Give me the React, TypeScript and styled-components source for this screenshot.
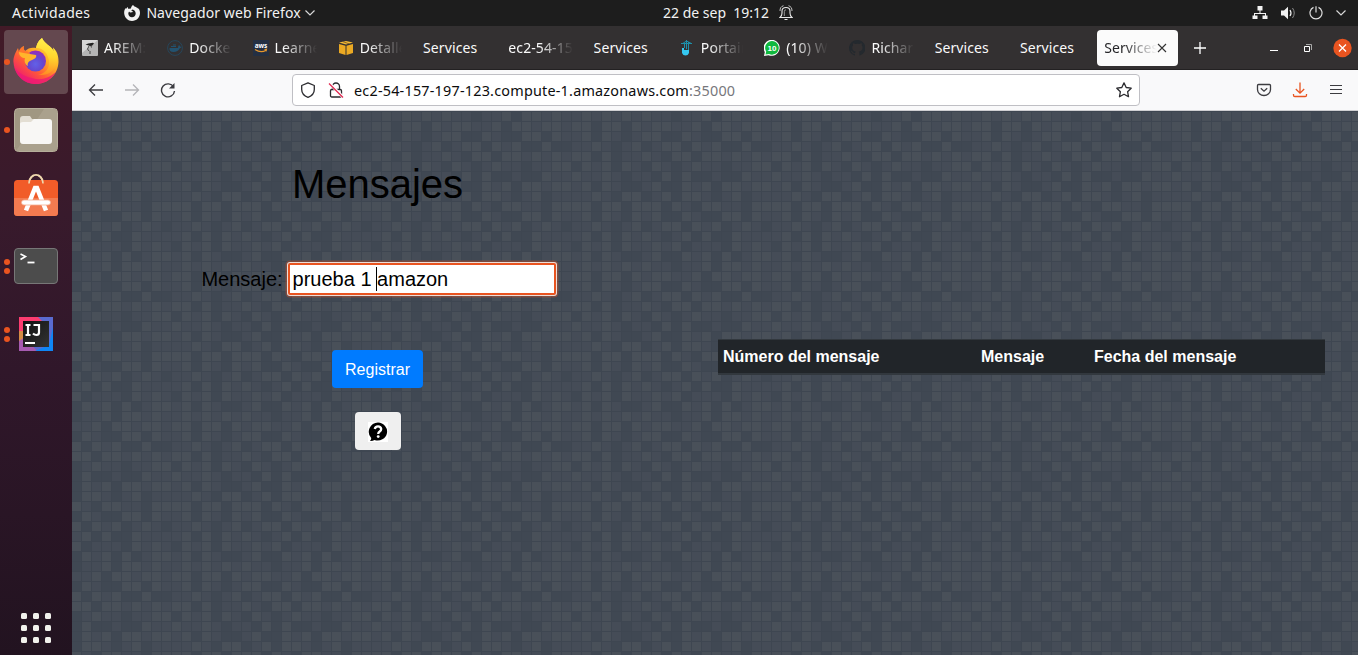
import React from "react";
import styled, { createGlobalStyle, css } from "styled-components";

const ui = `"Noto Sans", "Open Sans", sans-serif`;
const arial = `"Liberation Sans", Arial, sans-serif`;

const GlobalStyle = createGlobalStyle`
  * { box-sizing: border-box; }
  body { margin: 0; background: #414955; overflow: hidden; }
  svg { display: block; flex: none; }
`;

const Desktop = styled.div`
  display: grid;
  grid-template: 26px 629px / 72px 1fr;
  width: 1358px;
  height: 655px;
  font-family: ${ui};
`;

const TopBar = styled.header`
  grid-column: 1 / -1;
  display: grid;
  grid-template-columns: 651px 1fr auto;
  align-items: center;
  background: #1d1d1d;
  color: #f2f2f2;
  padding: 0 12px 1px 12px;
`;

const BarGroup = styled.div<{ $gap?: number; $indent?: number }>`
  display: flex;
  align-items: center;
  gap: ${(p) => p.$gap ?? 8}px;
  margin-left: ${(p) => p.$indent ?? 0}px;
`;

const Label = styled.span<{ $track?: number; $width?: number }>`
  font-size: 14px;
  line-height: 20px;
  white-space: pre;
  letter-spacing: ${(p) => p.$track ?? 0}px;
  ${(p) => p.$width && css`width: ${p.$width}px;`}
`;

const Dock = styled.nav`
  display: flex;
  flex-direction: column;
  background: linear-gradient(#421a27 0, #381a2c 30%, #30172a 55%, #221320 100%);
  padding-top: 4px;
`;

const DockSlot = styled.div<{ $active?: boolean; $height: number }>`
  display: grid;
  grid-template-columns: 7px 1fr;
  align-items: center;
  justify-items: center;
  width: 64px;
  height: ${(p) => p.$height}px;
  margin: 0 4px;
  border-radius: 4px;
  background: ${(p) => (p.$active ? "#64484f" : "transparent")};
`;

const Dots = styled.div`
  display: flex;
  flex-direction: column;
  gap: 3px;
  margin-left: -2px;
`;

const Dot = styled.i`
  width: 6px;
  height: 6px;
  border-radius: 50%;
  background: #ea5420;
`;

const DockIcon = styled.div`
  padding-right: 7px;
`;

const AppsGrid = styled.div`
  display: grid;
  grid-template-columns: repeat(3, 6px);
  gap: 6px;
  margin: auto auto 12px 21px;
`;

const AppsCell = styled.i`
  width: 6px;
  height: 6px;
  border-radius: 1.5px;
  background: #f1f1ec;
`;

const Browser = styled.main`
  display: grid;
  grid-template-rows: 44px 41px 1fr;
  min-width: 0;
`;

const TabStrip = styled.div`
  display: flex;
  align-items: center;
  background: #333031;
  border-bottom: 1px solid #232122;
  color: #fafafa;
`;

const Tab = styled.div`
  display: flex;
  align-items: center;
  gap: 6px;
  width: 85.27px;
  flex: none;
  padding: 0 11px 0 10px;
`;

const TabTitle = styled.div<{ $fade?: boolean }>`
  flex: 1;
  min-width: 0;
  overflow: hidden;
  font-size: 14px;
  line-height: 22px;
  padding-top: 1px;
  letter-spacing: 0.1px;
  white-space: nowrap;
  ${(p) => p.$fade && css`mask-image: linear-gradient(to left, transparent 0, #000 34px);`}
`;

const ActiveTab = styled.div`
  display: flex;
  align-items: center;
  width: 81px;
  height: 36px;
  margin-left: 2px;
  border-radius: 4px;
  background: #fbfbfb;
  color: #252528;
  padding: 0 11px 0 7px;
`;

const NavBar = styled.div`
  display: flex;
  align-items: center;
  background: #f9f9fa;
  border-bottom: 1px solid #cfcfd2;
  padding: 0 14px 0 16px;
`;

const NavButtons = styled.div`
  display: flex;
  gap: 20px;
  width: 204px;
`;

const UrlBox = styled.div`
  display: flex;
  align-items: center;
  width: 848px;
  height: 32px;
  border: 1px solid #bfbfc4;
  border-radius: 4px;
  background: #fff;
  padding: 0 7px;
  gap: 12px;
`;

const Url = styled.div`
  flex: 1;
  font-size: 14.4px;
  line-height: 20px;
  color: #0c0c0d;
  margin-left: -2px;
  padding-top: 1px;
  letter-spacing: 0.21px;
  span { color: #77777c; }
`;

const NavActions = styled.div`
  display: flex;
  gap: 20px;
  margin-left: auto;
`;

const Page = styled.section`
  position: relative;
  overflow: hidden;
  display: grid;
  grid-template-columns: 646px 607px;
  color: #000;
  font-family: ${arial};
`;

const Backdrop = styled.svg`
  position: absolute;
  inset: 0;
`;

const FormColumn = styled.div`
  position: relative;
  display: flex;
  flex-direction: column;
  align-items: center;
  width: 611px;
`;

const Heading = styled.h1`
  margin: 49px 0 0;
  font-size: 40px;
  line-height: 48px;
  font-weight: 500;
`;

const Field = styled.label`
  display: flex;
  align-items: center;
  gap: 5px;
  margin-top: 55px;
  margin-left: 2px;
  font-size: 20px;
  line-height: 30px;
`;

const TextBox = styled.div`
  width: 268px;
  height: 32px;
  background: #fff;
  border: 2px solid #e95420;
  border-radius: 2px;
  box-shadow: 0 0 0 1px #eadfdb, 0 0 0 2.5px rgba(233, 84, 32, 0.35);
  padding-left: 3px;
  line-height: 28px;
  display: flex;
  align-items: center;
  white-space: pre;
`;

const Caret = styled.i`
  width: 1px;
  height: 24px;
  background: #000;
  margin: 0 0 0 -1px;
`;

const Register = styled.button`
  width: 91px;
  height: 38px;
  margin-top: 55px;
  border: 0;
  border-radius: 4px;
  background: #007bff;
  color: #fff;
  font: 16px/24px ${arial};
  padding: 2px 0 0;
`;

const Help = styled.button`
  display: grid;
  place-items: center;
  width: 46px;
  height: 38px;
  margin-top: 24px;
  border: 0;
  border-radius: 4px;
  background: #efefef;
  padding: 2px 0 0;
`;

const TableHead = styled.div`
  position: relative;
  display: grid;
  grid-template-columns: 258px 113px 1fr;
  align-self: start;
  height: 36px;
  margin-top: 228px;
  padding-left: 5px;
  background: #212529;
  border: solid #32383e;
  border-width: 1px 0 2px;
  color: #fff;
  font-size: 16px;
  font-weight: 700;
  line-height: 33px;
`;

const CELLS = [
  "11212121211011202212",
  "12202202122112022122",
  "11202101220021002202",
  "01121012012202120020",
  "12202011210220221212",
  "20212021021012110112",
  "12112101102020010021",
  "21202100120021202212",
  "11121022012022101201",
  "22202202220210221102",
  "11202102120021002202",
  "01121012012202120121",
  "11202021210120200211",
  "10212021121201110212",
  "21202100120021202012",
];
const SHADES = ["#404853", "#454c57", "#495059"];

const Mosaic = () => (
  <Backdrop width="1286" height="544">
    <defs>
      <pattern id="mosaic" x="90" width="200" height="150" patternUnits="userSpaceOnUse">
        <rect width="200" height="150" fill="#3e4651" />
        {CELLS.flatMap((row, y) =>
          row.split("").map((c, x) => (
            <rect key={`${x}-${y}`} x={x * 10} y={y * 10 + 1} width="9" height="9" fill={SHADES[+c]} />
          ))
        )}
      </pattern>
    </defs>
    <rect width="1286" height="544" fill="url(#mosaic)" />
  </Backdrop>
);

const Firefox = () => (
  <svg width="46" height="48" viewBox="0 1 46 48">
    <defs>
      <linearGradient id="ffBody" x1=".85" y1=".1" x2=".2" y2=".95">
        <stop offset="0" stopColor="#ffe83e" />
        <stop offset=".35" stopColor="#ffae25" />
        <stop offset=".65" stopColor="#ff5a37" />
        <stop offset="1" stopColor="#ee1575" />
      </linearGradient>
      <linearGradient id="ffFlame" x1=".6" y1="0" x2=".5" y2="1">
        <stop offset="0" stopColor="#fff44f" />
        <stop offset=".5" stopColor="#ffd52d" />
        <stop offset="1" stopColor="#ff8c24" />
      </linearGradient>
      <radialGradient id="ffGlobe" cx=".5" cy=".65" r=".6">
        <stop offset="0" stopColor="#6161e8" />
        <stop offset=".6" stopColor="#6547cf" />
        <stop offset="1" stopColor="#922fba" />
      </radialGradient>
    </defs>
    <path fill="url(#ffBody)" d="M29 1c-4 3-5 6-6 10-4-1-8 0-11 3-1-1-2-3-1-5-3 1-4 4-5 6L5 11C1 18 0 22 .6 26 1.500 38 11 47 23 47s22-9.500 22.500-22c.2-6-1.500-11-5.500-14.500l1 4c-3-6-9-7-12-13.500Z" />
    <path fill="url(#ffFlame)" d="M29 1c-4 3-5 6-6 10 8 0 12 6 13 13 1 8-5 13-11 14 12 1 19-6 19-16 0-4-1-8-4-11.500l1 4c-3-6-9-7-12-13.500Z" />
    <circle cx="22.500" cy="24" r="10.500" fill="url(#ffGlobe)" />
    <path fill="#ffb52b" d="M6 15c4-2 8-1 11 2l6 1c1 2-1 4-4 5-3 1-5 3-4 6-3-1-4-5-3-8-3 0-6-2-6-6Z" />
    <path fill="#ff762d" d="M12 14c-1-1-2-3-1-5-4 2-5 4-5 6 3 1 6 1 11 2-1-2-3-3-5-3Z" />
    <path fill="#eb1878" opacity=".75" d="M1 29c3 11 10 18 22 18 9 0 16-5 20-12-7 6-15 9-24 6C10 39 4 35 1 29Z" />
  </svg>
);

const FilesIcon = () => (
  <svg width="44" height="44" viewBox="0 0 44 44">
    <rect x=".5" y=".5" width="43" height="43" rx="4" fill="#a09782" stroke="#b6ae9b" />
    <path d="M30 1h13v42H2Z" fill="#aaa18d" />
    <path d="M6 11q0-3 3-3h7l2 3h4v5H6Z" fill="#e3ded3" />
    <path d="M6 16q0-2 3-2h8l3-3h15q3 0 3 3v19q0 3-3 3H9q-3 0-3-3Z" fill="#f8f7f5" />
  </svg>
);

const SoftwareIcon = () => (
  <svg width="44" height="44" viewBox="0 0 44 44" overflow="visible">
    <path d="M15 8.500C15-3 29-3 29 8.500" fill="none" stroke="#eed7ad" strokeWidth="1.800" />
    <rect y="5" width="44" height="36" rx="3.500" fill="#f15c29" />
    <path d="M0 23h44v14.500q0 3.500-3.500 3.500h-37Q0 41 0 37.500Z" fill="#f37b50" />
    <path d="M15 8.500C15.200 5 17 2 19.500.800M29 8.500C28.800 5 27 2 24.500.800" fill="none" stroke="#eed7ad" strokeWidth="1.600" />
    <path d="m12 35.500 9-22.500h2l9 22.500" fill="none" stroke="#fff" strokeWidth="4.500" />
    <rect x="7.500" y="25" width="29" height="5" rx="2.500" fill="#fff" stroke="#f4ad91" strokeWidth=".8" />
  </svg>
);

const TerminalIcon = () => (
  <svg width="44" height="36" viewBox="0 0 44 36">
    <rect x=".5" y=".5" width="43" height="35" rx="3.500" fill="#4c4c4c" stroke="#777" />
    <path d="m6.500 6 5 2.500-5 3" fill="none" stroke="#fff" strokeWidth="1.600" />
    <path d="M13.500 14.500h7" stroke="#fff" strokeWidth="1.800" />
  </svg>
);

const IntellijIcon = () => (
  <svg width="34" height="34" viewBox="0 0 34 34">
    <defs>
      <linearGradient id="ijInk" x1="0" y1="0" x2="1" y2="1">
        <stop offset="0" stopColor="#111" />
        <stop offset="1" stopColor="#333" />
      </linearGradient>
    </defs>
    <path fill="#5a6bd0" d="M0 0h34v34H0Z" />
    <path fill="#fc3c70" d="M0 0h19l6 6L4 18 0 14Z" />
    <path fill="#d58c45" d="M0 14h6v10l-4 5-2-5Z" />
    <path fill="#a65bb0" d="M0 24l6-4 12 14H0Z" />
    <path fill="#0f86f5" d="M34 10v24H16l14-6Z" />
    <rect x="4" y="4" width="26" height="26" fill="url(#ijInk)" />
    <path d="M6.500 8h5M9 8v10M6.500 18h5M14.500 8H20v7.500q0 2.500-2.500 2.500-2 0-3.500-1.500" fill="none" stroke="#fff" strokeWidth="2.200" />
    <path d="M6 26h10" stroke="#fff" strokeWidth="2" />
  </svg>
);

const FirefoxMono = () => (
  <svg width="16" height="16" viewBox="0 0 16 16">
    <path fill="#f2f2f2" d="M9 0C7.600 1 7 2.200 7 3.500 5.800 3.300 5 3.700 4.500 4.100 4 3.600 3.900 2.700 4 2 3 2.500 2.400 3.500 2 4l-.4-1C.5 4.500 0 6.500.2 8.500.6 12.800 4 16 8 16c4.400 0 8-3.600 8-8 0-2-.7-4-1.700-5l.2 1.200C12.900 1.500 11 2.700 9 0Z" />
    <path fill="#1d1d1d" d="M8.500 4.500c1.700.4 3.200 1.900 3.200 4 0 2.200-1.700 3.700-3.700 3.700S4.300 10.700 4.300 8.500c0-.8.300-1.500.8-2 .3.600.8 1 1.500 1L9 6.900c0-.7-.9-.8-1.700-.8.100-.7.500-1.300 1.200-1.600Z" />
  </svg>
);

const Chevron = () => (
  <svg width="10" height="6" viewBox="0 0 10 6" fill="none" stroke="#d8d8d8" strokeWidth="1.200"><path d="m.5.500 4.500 4.500L9.500.500" /></svg>
);

const Bell = () => (
  <svg width="14" height="16" viewBox="0 0 14 16" fill="none" stroke="#e6e6e6" strokeWidth="1.100">
    <path d="M1 12.500Q3 11 3 8V6Q3 2.500 7 2.500T11 6v2q0 3 2 4.500ZM5.500 14.500h3" />
    <path d="M1 6C1 3 2 1.500 4.500.700M13 6c0-3-1-4.500-3.500-5.300" strokeWidth=".8" />
    <path d="M5.300 11V6.500q0-1.700 1.700-1.700" strokeWidth=".6" />
  </svg>
);

const NetworkIcon = () => (
  <svg width="16" height="14" viewBox="0 0 16 14" fill="#f2f2f2"><path d="M5.500 0h5v4.500h-2V7H14v2.500h1.500V13h-5V9.500H13V8H3v1.500h2.500V13h-5V9.500H2V7h5.500V4.500h-2Z" /></svg>
);

const VolumeIcon = () => (
  <svg width="15" height="14" viewBox="0 0 15 14" fill="none" stroke="#f2f2f2">
    <path d="M0 4.500h3L7 .800v12.400L3 9.500H0Z" fill="#f2f2f2" stroke="none" />
    <path d="M9 4q2 3 0 6" strokeWidth="1.200" /><path d="M11.500 2q3.500 5 0 10" stroke="#8b8b8b" />
  </svg>
);

const PowerIcon = () => (
  <svg width="14" height="14" viewBox="0 0 14 14" fill="none" stroke="#dedede" strokeWidth="1.200"><path d="M4.500 1.400a6 6 0 1 0 5 0M7 .200V6.500" /></svg>
);

const Favicon = ({ kind }: { kind: string }) => {
  switch (kind) {
    case "arem":
      return (
        <svg width="16" height="16" viewBox="0 0 16 16"><rect width="16" height="16" rx="1" fill="#b5b5b5" /><path d="M0 0h16L0 13Z" fill="#d6d6d6" /><path d="M3.500 4.800 6 3.500l5-.8 1 .8-2 2.300-2 .2-2-.8Z" fill="#222" /><path d="m7 6-1.500 3 1.500 2M9 6l.5 1.500M8 11v3" stroke="#444" fill="none" /></svg>
      );
    case "docker":
      return (
        <svg width="16" height="16" viewBox="0 0 16 16"><circle cx="8" cy="8" r="7.400" fill="none" stroke="#27465a" /><path d="M2.500 8h8.500q0-2 1-3 1 .500 1 1.500 1 0 1.500.500-.500 1-1.700 1.200Q11 12 6.500 12T2.500 8Z" fill="#23526f" /><path d="M4 6.500h5M6 5h3" stroke="#23526f" /></svg>
      );
    case "aws":
      return (
        <svg width="16" height="16" viewBox="0 0 16 16"><rect width="16" height="16" fill="#232f43" /><text x="8" y="7.800" textAnchor="middle" fontFamily="Noto Sans" fontWeight="700" fontSize="6.500" fill="#fff">aws</text><path d="M2 9.500q6 4 11 .700M11.500 9.500l2-.200-.500 2" fill="none" stroke="#e6962b" strokeWidth="1.200" /></svg>
      );
    case "box":
      return (
        <svg width="16" height="16" viewBox="0 0 16 16"><path d="m1 2.500 7-1.500 7 1.500-7 2Z" fill="#f6ba35" /><path d="m1 4 6.500 1.700V15L1 13ZM15 4 8.500 5.700V15L15 13Z" fill="#eba923" /><path d="m4.500 1.500 7 2.500" stroke="#6b5122" strokeWidth=".8" /></svg>
      );
    case "portainer":
      return (
        <svg width="16" height="16" viewBox="0 0 16 16"><path d="M2 3.500h11M7.500 0v9M9.500 2v9M4 3.300 7.500 1 12 3.300M5.500 4v4" stroke="#1d8fa9" fill="none" /><path d="M3 8h2v2h5v3q-1 2.500-3.500 2.500T3 13Z" fill="#35c8f0" /></svg>
      );
    case "whatsapp":
      return (
        <svg width="16" height="16" viewBox="0 0 16 16"><path d="M0 16 .8 12A8 8 0 1 1 4.500 15.200Z" fill="#fff" /><path d="m1.500 14.500.7-3A6.800 6.800 0 1 1 5 14Z" fill="#10b93e" /><text x="8" y="10.700" textAnchor="middle" fontFamily="Liberation Sans" fontWeight="700" fontSize="8" fill="#fff">10</text></svg>
      );
    default:
      return (
        <svg width="16" height="16" viewBox="0 0 16 16"><path fill="#24292e" d="M8 0a8 8 0 0 0-2.500 15.600c.4.100.500-.200.500-.400v-1.500c-2 .500-2.700-.500-2.900-1-.1-.3-.6-1-1-1.200-.4-.2-.9-.7 0-.7.800 0 1.300.7 1.500 1 .9 1.500 2.200 1.100 2.700.9.100-.6.300-1 .6-1.300-1.800-.2-3.600-.9-3.600-4 0-.9.300-1.600.8-2.100-.1-.2-.4-1 .1-2.100 0 0 .7-.2 2.200.8a7.500 7.500 0 0 1 4 0c1.500-1 2.200-.8 2.200-.8.400 1.100.2 1.900.1 2.100.5.500.8 1.200.8 2.100 0 3.100-1.900 3.800-3.700 4 .3.200.6.700.6 1.500v2.300c0 .2.100.5.500.4A8 8 0 0 0 8 0Z" /></svg>
      );
  }
};

const TABS: { icon?: string; title: string }[] = [
  { icon: "arem", title: "AREM:" },
  { icon: "docker", title: "Docke" },
  { icon: "aws", title: "Learne" },
  { icon: "box", title: "Detalle" },
  { title: "Services" },
  { title: "ec2-54-15" },
  { title: "Services" },
  { icon: "portainer", title: "Portain" },
  { icon: "whatsapp", title: "(10) W" },
  { icon: "github", title: "Richar" },
  { title: "Services" },
  { title: "Services" },
];

const WindowControls = styled.div`
  display: flex;
  align-items: center;
  margin-left: auto;
  padding-right: 6px;
`;

const NewTab = styled.div`
  margin-left: 16px;
`;

const Running = ({ count }: { count: number }) => (
  <Dots>{Array.from({ length: count }, (_, i) => <Dot key={i} />)}</Dots>
);

export default function App() {
  return (
    <Desktop>
      <GlobalStyle />
      <TopBar>
        <BarGroup $gap={0}>
          <Label $track={0.33}>Actividades</Label>
          <BarGroup $gap={6} $indent={34}>
            <FirefoxMono />
            <Label $track={0.1}>Navegador web Firefox</Label>
          </BarGroup>
          <BarGroup $indent={4}>
            <Chevron />
          </BarGroup>
        </BarGroup>
        <BarGroup $gap={9}>
          <Label $width={107}>22 de sep  19:12</Label>
          <Bell />
        </BarGroup>
        <BarGroup $gap={13}>
          <NetworkIcon />
          <VolumeIcon />
          <PowerIcon />
          <Chevron />
        </BarGroup>
      </TopBar>
      <Dock>
        <DockSlot $active $height={64}><Running count={1} /><DockIcon><Firefox /></DockIcon></DockSlot>
        <DockSlot $height={72}><Running count={1} /><DockIcon><FilesIcon /></DockIcon></DockSlot>
        <DockSlot $height={62}><span /><DockIcon><SoftwareIcon /></DockIcon></DockSlot>
        <DockSlot $height={76}><Running count={2} /><DockIcon><TerminalIcon /></DockIcon></DockSlot>
        <DockSlot $height={60}><Running count={2} /><DockIcon><IntellijIcon /></DockIcon></DockSlot>
        <AppsGrid>{Array.from({ length: 9 }, (_, i) => <AppsCell key={i} />)}</AppsGrid>
      </Dock>
      <Browser>
        <TabStrip>
          {TABS.map((t, i) => (
            <Tab key={i}>
              {t.icon && <Favicon kind={t.icon} />}
              <TabTitle $fade={t.title !== "Services"}>{t.title}</TabTitle>
            </Tab>
          ))}
          <ActiveTab>
            <TabTitle $fade>Services</TabTitle>
            <svg width="10" height="10" viewBox="0 0 10 10" stroke="#333" strokeWidth="1.100"><path d="m1 1 8 8M9 1 1 9" /></svg>
          </ActiveTab>
          <NewTab>
            <svg width="12" height="12" viewBox="0 0 12 12" stroke="#fff" strokeWidth="1.300"><path d="M6 0v12M0 6h12" /></svg>
          </NewTab>
          <WindowControls>
            <svg width="88" height="20" viewBox="0 0 88 20" fill="none" stroke="#fff">
              <path d="M6 12.500h8" />
              <path d="M40.500 8.500h5v5h-5Z" />
              <path d="M42 6.500h5.500V12" stroke="#aaa" />
              <circle cx="78.500" cy="10" r="9.200" fill="#e95420" stroke="none" />
              <path d="m75 6.500 7 7M82 6.500l-7 7" strokeWidth="1.300" />
            </svg>
          </WindowControls>
        </TabStrip>
        <NavBar>
          <NavButtons>
            <svg width="16" height="16" viewBox="0 0 16 16" fill="none" stroke="#3c3c40" strokeWidth="1.300"><path d="M15 8H1.500M7 2.500 1.500 8 7 13.500" /></svg>
            <svg width="16" height="16" viewBox="0 0 16 16" fill="none" stroke="#b5b5b8" strokeWidth="1.300"><path d="M1 8h13.500M9 2.500 14.500 8 9 13.500" /></svg>
            <svg width="16" height="16" viewBox="0 0 16 16" fill="none" stroke="#3c3c40" strokeWidth="1.400"><path d="M13.600 5A6.500 6.500 0 1 0 14.500 9" /><path d="M14.500 1v5.500H9Z" fill="#3c3c40" stroke="none" /></svg>
          </NavButtons>
          <UrlBox>
            <svg width="16" height="16" viewBox="0 0 16 16" fill="none" stroke="#2b2b2f" strokeWidth="1.300"><path d="M8 .800 14.300 3.500v4C14.300 11 11.500 14 8 15.300 4.500 14 1.700 11 1.700 7.500v-4Z" strokeLinejoin="round" /></svg>
            <svg width="16" height="16" viewBox="0 0 16 16" fill="none" stroke="#2b2b2f" strokeWidth="1.300"><rect x="2.500" y="7.500" width="11" height="7.500" rx="1.300" /><path d="M4.500 7V4.500a3.500 3.500 0 0 1 7 0V7" /><path d="m1 1 14 14" stroke="#fff" strokeWidth="3" /><path d="m1 1.500 14 14" stroke="#e22850" strokeWidth="1.300" /></svg>
            <Url>ec2-54-157-197-123.compute-1.amazonaws.com<span>:35000</span></Url>
            <svg width="16" height="16" viewBox="0 0 16 16" fill="none" stroke="#2b2b2f" strokeWidth="1.300" strokeLinejoin="round"><path d="m8 .900 2.200 4.600 5 .700-3.600 3.500.900 5L8 12.300l-4.500 2.400.900-5L.800 6.200l5-.700Z" /></svg>
          </UrlBox>
          <NavActions>
            <svg width="16" height="16" viewBox="0 0 16 16" fill="none" stroke="#3c3c40" strokeWidth="1.300"><path d="M2.500 2.500h11q1 0 1 1v4a6.500 6 0 0 1-13 0v-4q0-1 1-1Z" /><path d="M4.800 6.200 8 9.200l3.200-3" /></svg>
            <svg width="16" height="16" viewBox="0 0 16 16" fill="none" stroke="#e95420" strokeWidth="1.300"><path d="M8 .500v10.500M3.800 7 8 11.200 12.200 7M1.500 12v1.200q0 1.300 1.300 1.300h10.400q1.300 0 1.300-1.300V12" /></svg>
            <svg width="16" height="16" viewBox="0 0 16 16" stroke="#3c3c40" strokeWidth="1.200"><path d="M2 3.500h12M2 7.500h12M2 11.500h12" /></svg>
          </NavActions>
        </NavBar>
        <Page>
          <Mosaic />
          <FormColumn>
            <Heading>Mensajes</Heading>
            <Field>
              Mensaje:
              <TextBox>prueba 1 <Caret />amazon</TextBox>
            </Field>
            <Register>Registrar</Register>
            <Help aria-label="Ayuda">
              <svg width="20" height="20" viewBox="0 0 20 20">
                <path fill="#fff" d="M0 0h20v20H0Z" />
                <path d="M10 .500a9.500 9 0 1 1-3.500 17.500Q4.500 19.300 2 19q1.300-1.500 1.200-3A9.300 9.300 0 0 1 10 .500Z" />
                <path d="M6.800 7Q7.200 4.300 10 4.300T13.200 7q0 1.500-1.500 2.500T10.200 12" fill="none" stroke="#fff" strokeWidth="2.300" />
                <circle cx="10.200" cy="14.600" r="1.400" fill="#fff" />
              </svg>
            </Help>
          </FormColumn>
          <TableHead>
            <span>Número del mensaje</span>
            <span>Mensaje</span>
            <span>Fecha del mensaje</span>
          </TableHead>
        </Page>
      </Browser>
    </Desktop>
  );
}
